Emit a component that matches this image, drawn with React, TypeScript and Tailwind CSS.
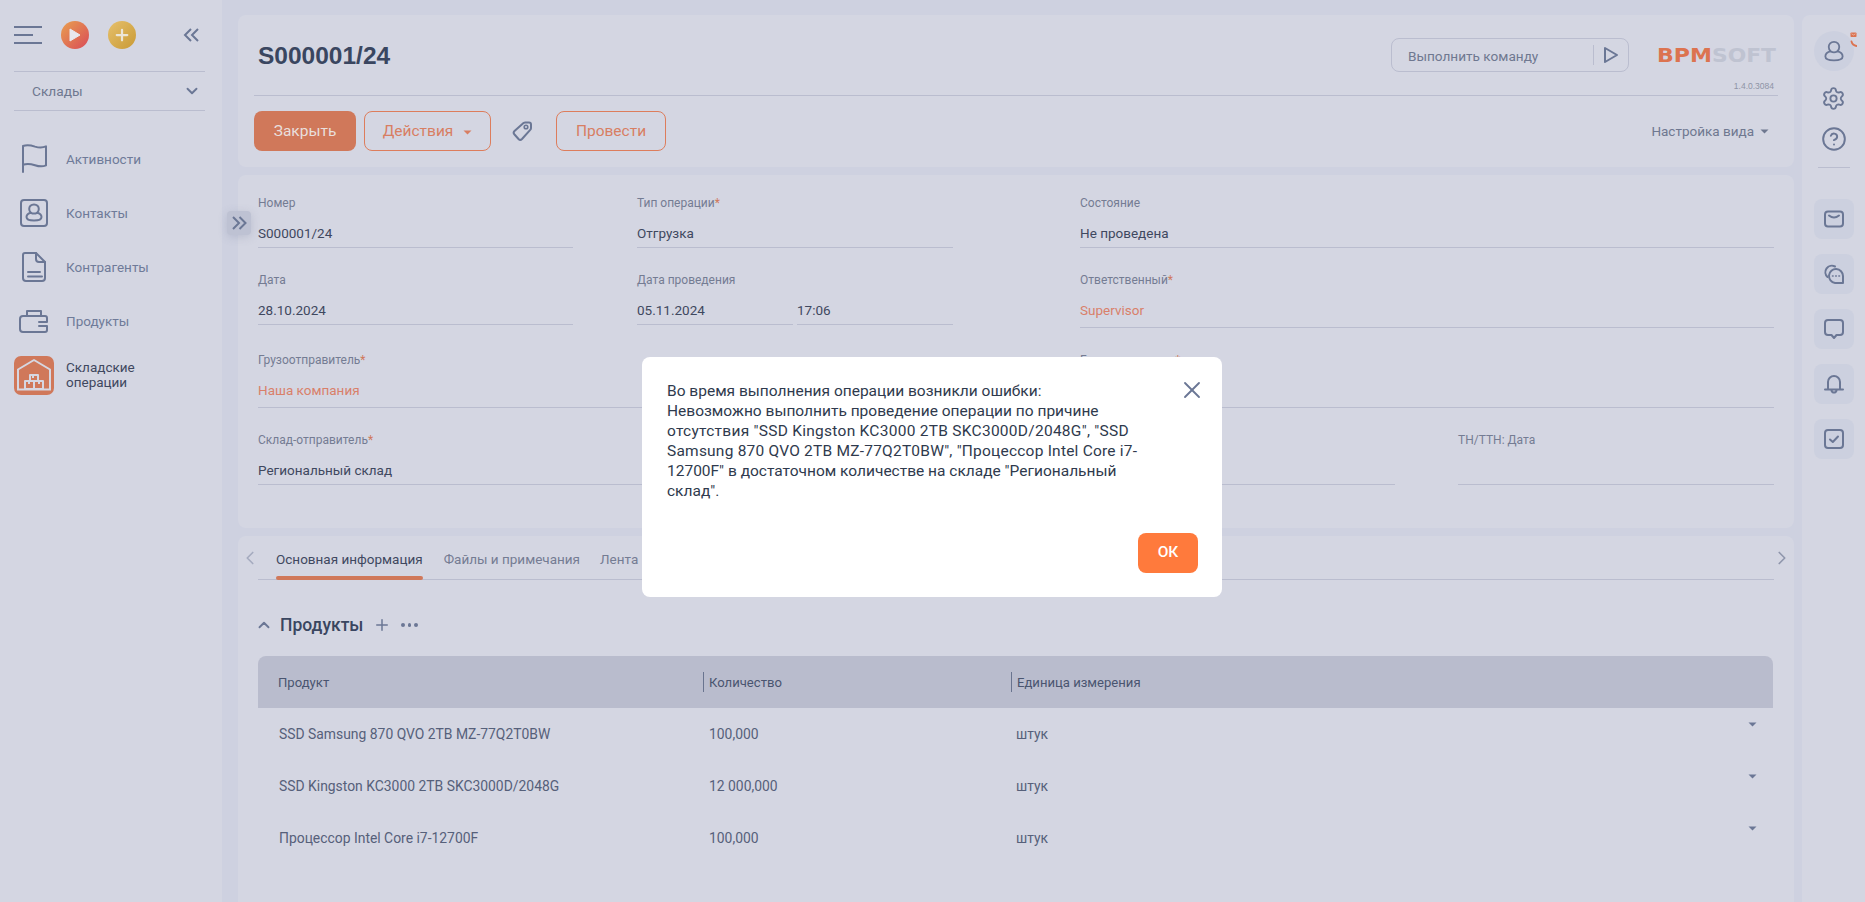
import React from "react";
import { Settings, CircleHelp, ChevronDown, ChevronUp, ChevronLeft, ChevronRight, X, Plus } from "lucide-react";

const ink = "#6b7795";

function Caret({ className }: { className: string }) {
  return (
    <svg width="9" height="5" viewBox="0 0 9 5" className={className}>
      <path d="M0.5 0.5h8L4.5 4.5z" fill="currentColor" />
    </svg>
  );
}

function NavIcon({ kind }: { kind: string }) {
  const p = { fill: "none", stroke: ink, strokeWidth: 2, strokeLinecap: "round" as const, strokeLinejoin: "round" as const };
  if (kind === "flag")
    return (
      <svg width="32" height="32" viewBox="0 0 32 32">
        <path {...p} d="M5 29V3c4-1.600 8-.8 12 .6 4 1.200 7.500 1.300 11-.2v19c-3.500 1.500-7 1.200-11-.2-4-1.300-8-2-12-.4" />
      </svg>
    );
  if (kind === "contact")
    return (
      <svg width="32" height="32" viewBox="0 0 32 32">
        <rect {...p} x="3" y="3" width="26" height="26" rx="3" />
        <path {...p} d="M16 7.500c-3 0-4.800 2-4.800 4.500 0 1.600.7 2.900 1.700 3.800-2.300.6-4.400 2-4.400 4.200 0 2.500 3 3.500 7.500 3.500s7.500-1 7.500-3.500c0-2.200-2.100-3.600-4.400-4.200 1-.9 1.700-2.200 1.700-3.800 0-2.500-1.800-4.500-4.800-4.500z" />
        <path {...p} d="M12.900 15.800c1.900 1 4.300 1 6.200 0" />
      </svg>
    );
  if (kind === "doc")
    return (
      <svg width="32" height="32" viewBox="0 0 32 32">
        <path {...p} d="M7 2h11l9 9v16a3 3 0 0 1-3 3H8a3 3 0 0 1-3-3V4a2 2 0 0 1 2-2z" />
        <path {...p} d="M18 2v6a3 3 0 0 0 3 3h6M10 21h12M10 25.500h14" />
      </svg>
    );
  return (
    <svg width="32" height="32" viewBox="0 0 32 32">
      <path {...p} d="M29 17v-4a2 2 0 0 0-2-2H5a3 3 0 0 0-3 3v10a3 3 0 0 0 3 3h22a2 2 0 0 0 2-2v-4M9 11V6h14v5M21 17h8M21 21h8" />
    </svg>
  );
}

function Warehouse() {
  return (
    <svg width="40" height="39" viewBox="0 0 40 39">
      <rect width="40" height="39" rx="7" fill="#d0785a" />
      <g fill="none" stroke="#d6d7e2" strokeWidth="2" strokeLinejoin="round">
        <path d="M4 33V13.500L20 4l16 9.500V33" />
        <path d="M3 33.500h34" />
        <path d="M16 19h8v6h-8zM11 25h9v8h-9zM20 25h9v8h-9zM19 19v3M15 25v3M25 25v3" />
      </g>
    </svg>
  );
}

function RailIcon({ kind }: { kind: string }) {
  const p = { fill: "none", stroke: ink, strokeWidth: 2, strokeLinecap: "round" as const, strokeLinejoin: "round" as const };
  if (kind === "mail")
    return (
      <svg width="20" height="20" viewBox="0 0 20 20">
        <rect {...p} x="1" y="2.500" width="18" height="15" rx="3" />
        <path {...p} d="M5 6.500c3 2.400 7 2.400 10 0" />
      </svg>
    );
  if (kind === "chats")
    return (
      <svg width="20" height="20" viewBox="0 0 20 20">
        <path {...p} d="M3.500 13A6.500 6.500 0 0 1 11 2.500" />
        <path {...p} d="M19 19h-8a7 7 0 1 1 8-7z" />
        <path d="M8.500 12h.6M11.700 12h.6M14.900 12h.6" stroke={ink} strokeWidth="1.600" strokeLinecap="round" />
      </svg>
    );
  if (kind === "chat")
    return (
      <svg width="20" height="22" viewBox="0 0 20 22">
        <path {...p} d="M4 2h12a3 3 0 0 1 3 3v9a3 3 0 0 1-3 3h-3.500L10 20l-2.500-3H4a3 3 0 0 1-3-3V5a3 3 0 0 1 3-3z" />
      </svg>
    );
  if (kind === "bell")
    return (
      <svg width="20" height="20" viewBox="0 0 20 20">
        <path {...p} d="M4 15.500V8a6 6 0 0 1 12 0v7.500M1 15.500h18M7.500 16.500c.6 2.700 4.400 2.700 5 0" />
      </svg>
    );
  return (
    <svg width="20" height="20" viewBox="0 0 20 20">
      <rect {...p} x="1" y="1" width="18" height="18" rx="3" />
      <path {...p} d="M6 10.500l2.800 2.500L14 7.500" />
    </svg>
  );
}

function Field({ label, star, value, tone, w, gap, pb }: { label?: string; star?: boolean; value?: string; tone?: string; w: string; gap: string; pb: string }) {
  return (
    <div className={`flex flex-col border-b border-[#babdcf] ${w} ${pb}`}>
      <div className="h-4 text-[12px] leading-4 text-[#747c93]">
        {label}
        {star && <span className="text-[#d0785a]">*</span>}
      </div>
      <div className={`h-5 text-[13.500px] leading-5 ${gap} ${tone === "o" ? "text-[#d9806a]" : "text-[#3f485f]"}`}>{value}</div>
    </div>
  );
}

const rows = [
  ["SSD Samsung 870 QVO 2TB MZ-77Q2T0BW", "100,000"],
  ["SSD Kingston KC3000 2TB SKC3000D/2048G", "12 000,000"],
  ["Процессор Intel Core i7-12700F", "100,000"],
];

export default function App() {
  return (
    <div className="relative flex h-[902px] w-[1865px] overflow-hidden bg-[#ced1e0] font-['Roboto',sans-serif]">
      {/* sidebar */}
      <aside className="flex w-[222px] shrink-0 flex-col bg-[#d4d6e2] px-[14px]">
        <div className="flex h-[71px] items-center pb-[1px]">
          <svg width="28" height="18" viewBox="0 0 28 18" className="shrink-0">
            <path d="M0 1h28M0 9h19M0 17h28" stroke={ink} strokeWidth="2" />
          </svg>
          <div className="ml-[19px] flex h-7 w-7 shrink-0 items-center justify-center rounded-full bg-[linear-gradient(135deg,#e9a04f,#d94b58)]">
            <svg width="12" height="14" viewBox="0 0 12 14"><path d="M1 1l10 6-10 6z" fill="#e8e8ee" stroke="#e8e8ee" strokeLinejoin="round" /></svg>
          </div>
          <div className="ml-[19px] flex h-7 w-7 shrink-0 items-center justify-center rounded-full bg-[linear-gradient(135deg,#e6c06c,#c99a35)]">
            <Plus size={18} strokeWidth={3} color="#ece6d8" />
          </div>
          <svg width="16" height="14" viewBox="0 0 16 14" className="ml-[47px] shrink-0">
            <path d="M8 1L2 7l6 6M15 1L9 7l6 6" fill="none" stroke={ink} strokeWidth="2" />
          </svg>
        </div>
        <div className="flex h-[40px] w-[191px] items-center border-y border-[#babdcf] pl-[18px] pr-[4px] text-[13.700px] text-[#6f7890]">
          <span className="flex-1">Склады</span>
          <ChevronDown size={18} strokeWidth={2.500} color={ink} />
        </div>
        <nav className="mt-[21px] flex flex-col text-[13.500px] text-[#6f7b99]">
          {[["flag", "Активности"], ["contact", "Контакты"], ["doc", "Контрагенты"], ["wallet", "Продукты"]].map(([k, t]) => (
            <div key={k} className="flex h-[54px] items-center">
              <div className="ml-[4px] w-[48px]"><NavIcon kind={k} /></div>
              <span className="pt-[1px]">{t}</span>
            </div>
          ))}
          <div className="flex h-[54px] items-center">
            <div className="w-[52px]"><Warehouse /></div>
            <span className="leading-[15px] text-[#3f485f]">Складские<br />операции</span>
          </div>
        </nav>
      </aside>

      {/* expander */}
      <div className="absolute left-[227px] top-[211px] flex h-6 w-6 items-center justify-center rounded-[4px] bg-[#bec2d3] shadow-[0_2px_8px_rgba(110,118,150,0.25)]">
        <svg width="15" height="14" viewBox="0 0 15 14">
          <path d="M1 1l6 6-6 6M7.500 1l6 6-6 6" fill="none" stroke={ink} strokeWidth="2" />
        </svg>
      </div>

      {/* main */}
      <main className="ml-4 flex w-[1556px] shrink-0 flex-col gap-2 pt-[15px]">
        <section className="h-[152px] rounded-lg bg-[#d4d6e2] px-4">
          <div className="flex h-[81px] items-center border-b border-[#babdcf] pb-[1px]">
            <h1 className="ml-1 flex-1 pt-[3px] font-['Liberation_Sans',sans-serif] text-[24.500px] font-bold text-[#3a4660]">S000001/24</h1>
            <div className="flex h-[34px] w-[238px] items-center rounded-lg border border-[#babdcf] pl-[16px] text-[13.600px] text-[#6f7890]">
              <span className="flex-1 pt-[3px]">Выполнить команду</span>
              <div className="h-5 w-px bg-[#babdcf]" />
              <svg width="16" height="18" viewBox="0 0 16 18" className="mx-[9px]"><path d="M2 2l12 7-12 7z" fill="none" stroke={ink} strokeWidth="2" strokeLinejoin="round" /></svg>
            </div>
            <div className="ml-[28px] mr-[2px] flex h-[80px] w-[119px] flex-col items-end pt-[29px]">
              <svg width="119" height="21" viewBox="0 0 119 21" className="overflow-visible">
                <text x="0" y="18" fontFamily="DejaVu Sans" fontWeight="700" fontSize="20" fill="#dc7350" textLength="55" lengthAdjust="spacingAndGlyphs">BPM</text>
                <text x="55" y="18" fontFamily="DejaVu Sans" fontWeight="700" fontSize="20" fill="#bfc3d1" textLength="64" lengthAdjust="spacingAndGlyphs">SOFT</text>
              </svg>
              <span className="mr-[2px] mt-[16px] font-['Liberation_Sans',sans-serif] text-[8.500px] leading-[10px] text-[#8e94a6]">1.4.0.3084</span>
            </div>
          </div>
          <div className="mt-[15px] flex items-center text-[15.500px]">
            <button className="flex h-10 w-[102px] items-center justify-center rounded-lg bg-[#d0785a] pt-[2px] text-[#e9dfdc]">Закрыть</button>
            <button className="ml-2 flex h-10 w-[127px] items-center justify-center gap-[10px] rounded-lg border border-[#dd7d5c] pt-[2px] text-[#d87e62]">
              Действия
              <Caret className="text-[#d87e62]" />
            </button>
            <svg width="22" height="22" viewBox="0 0 22 22" className="ml-[20px]">
              <path d="M3.500 11L12.500 3a3 3 0 0 1 2-.6h3.500a2 2 0 0 1 2 2v3.500a3 3 0 0 1-.8 2L11 19a2.500 2.500 0 0 1-3.500 0L3.500 14.500a2.500 2.500 0 0 1 0-3.500z" fill="none" stroke={ink} strokeWidth="2" strokeLinejoin="round" />
              <circle cx="15" cy="7" r="1.800" fill="none" stroke={ink} strokeWidth="1.600" />
            </svg>
            <button className="ml-[23px] flex h-10 w-[110px] items-center justify-center rounded-lg border border-[#dd7d5c] pt-[2px] text-[#d87e62]">Провести</button>
            <div className="ml-auto mr-[9px] flex items-center gap-[6px] text-[13.500px] text-[#6f7890]">
              Настройка вида
              <Caret className="text-[#6f7890]" />
            </div>
          </div>
        </section>

        <section className="h-[353px] rounded-lg bg-[#d4d6e2] pl-5 pr-5 pt-5">
          <div className="flex h-[77px] items-start">
            <Field label="Номер" value="S000001/24" w="w-[315px]" gap="mt-3" pb="pb-1" />
            <Field label="Тип операции" star value="Отгрузка" w="w-[316px] ml-[64px]" gap="mt-3" pb="pb-1" />
            <Field label="Состояние" value="Не проведена" w="w-[694px] ml-[127px]" gap="mt-3" pb="pb-1" />
          </div>
          <div className="flex h-[80px] items-start">
            <Field label="Дата" value="28.10.2024" w="w-[315px]" gap="mt-3" pb="pb-1" />
            <Field label="Дата проведения" value="05.11.2024" w="w-[156px] ml-[64px]" gap="mt-3" pb="pb-1" />
            <Field label=" " value="17:06" w="w-[156px] ml-[4px]" gap="mt-3" pb="pb-1" />
            <Field label="Ответственный" star value="Supervisor" tone="o" w="w-[694px] ml-[127px]" gap="mt-3" pb="pb-[7px]" />
          </div>
          <div className="flex h-[80px] items-start">
            <Field label="Грузоотправитель" star value="Наша компания" tone="o" w="w-[695px]" gap="mt-3" pb="pb-[7px]" />
            <Field label="Грузополучатель" star w="w-[694px] ml-[127px]" gap="mt-3" pb="pb-[7px]" />
          </div>
          <div className="flex items-start">
            <Field label="Склад-отправитель" star value="Региональный склад" w="w-[500px]" gap="mt-3" pb="pb-1" />
            <Field w="w-[617px] ml-[20px]" gap="mt-3" pb="pb-1" />
            <Field label="ТН/ТТН: Дата" w="w-[316px] ml-[63px]" gap="mt-3" pb="pb-1" />
          </div>
        </section>

        <section className="flex-1 rounded-t-lg bg-[#d4d6e2] px-5">
          <div className="-mx-[9px] flex h-[43px] items-center justify-between">
            <ChevronLeft size={22} strokeWidth={1.800} color="#a5abbf" className="-ml-[10px] mt-[1px]" />
            <ChevronRight size={22} strokeWidth={1.800} color="#8f96ac" className="-mr-[10px] mt-[1px]" />
          </div>
          <div className="-mt-[43px] flex h-[44px] border-b border-[#babdcf] pl-[18px] text-[13.500px]">
            <div className="relative flex h-[43px] items-center pt-[3px] text-[#3f485f]">
              Основная информация
              <div className="absolute bottom-[-1px] left-0 right-0 h-1 rounded-full bg-[#d0785a]" />
            </div>
            <div className="ml-[21px] flex h-[43px] items-center pt-[3px] text-[#747c93]">Файлы и примечания</div>
            <div className="ml-5 flex h-[43px] items-center pt-[3px] text-[#747c93]">Лента</div>
          </div>
          <div className="mt-[31px] flex h-7 items-center">
            <ChevronUp size={18} strokeWidth={2.500} color={ink} className="-ml-[3px]" />
            <span className="ml-[7px] text-[17.500px] font-medium text-[#3a4660]">Продукты</span>
            <Plus size={18} strokeWidth={2} color={ink} className="ml-[10px]" />
            <span className="ml-[10px] flex gap-[3px]">
              <i className="h-[3.500px] w-[3.500px] rounded-full bg-[#6b7795]" />
              <i className="h-[3.500px] w-[3.500px] rounded-full bg-[#6b7795]" />
              <i className="h-[3.500px] w-[3.500px] rounded-full bg-[#6b7795]" />
            </span>
          </div>
          <div className="mt-[17px] grid h-[52px] w-[1515px] grid-cols-[445px_308px_1fr] items-center rounded-t-lg bg-[#b9bccd] text-[13.100px] text-[#4a5570]">
            <div className="pl-5 pt-[1px]">Продукт</div>
            <div className="flex items-center"><i className="h-5 w-px bg-[#69748f]" /><span className="pl-[5px] pt-[1px]">Количество</span></div>
            <div className="flex items-center"><i className="h-5 w-px bg-[#69748f]" /><span className="pl-[5px] pt-[1px]">Единица измерения</span></div>
          </div>
          {rows.map(([a, b]) => (
            <div key={a} className="grid h-[52px] w-[1515px] grid-cols-[445px_308px_1fr_30px] items-center text-[13.900px] text-[#56607a]">
              <div className="pl-[21px]">{a}</div>
              <div className="pl-[6px]">{b}</div>
              <div className="pl-[5px]">штук</div>
              <Caret className="ml-[5px] mt-[14px] self-start text-[#6b7795]" />
            </div>
          ))}
        </section>
      </main>

      {/* right rail */}
      <aside className="ml-2 mt-[15px] flex flex-1 flex-col items-center rounded-tl-lg bg-[#d4d6e2]">
        <div className="relative mt-4 flex h-10 w-10 items-center justify-center rounded-full bg-[#ccd0df]">
          <svg width="20" height="22" viewBox="0 0 22 24">
            <path d="M11 2c-3.600 0-5.800 2.400-5.800 5.600 0 2.100 1 3.800 2.300 4.900C4 13.200 1.500 15 1.500 18.100c0 3 3.600 4.200 9.500 4.200s9.500-1.200 9.500-4.200c0-3.100-2.500-4.900-6-5.600 1.300-1.100 2.300-2.800 2.300-4.900C16.800 4.400 14.600 2 11 2z" fill="none" stroke={ink} strokeWidth="2" strokeLinejoin="round" />
            <path d="M7.500 12.500c2.200 1.200 4.800 1.200 7 0" fill="none" stroke={ink} strokeWidth="2" />
          </svg>
          <svg width="7" height="16" viewBox="0 0 7 16" className="absolute right-[-3px] top-[1px]">
            <rect x="0.500" y="0.500" width="6" height="4.500" rx="0.800" fill="#dc7350" />
            <path d="M1.500 1.800l2 1.200 2-1.200" stroke="#e9d9d4" strokeWidth="0.600" fill="none" />
            <path d="M1.500 9.500c.6 2.500 2.400 4 5 4.500" stroke="#dc7350" strokeWidth="1.800" fill="none" strokeLinecap="round" />
          </svg>
        </div>
        <Settings size={25} strokeWidth={1.800} color={ink} className="mt-[15px]" />
        <CircleHelp size={26} strokeWidth={1.800} color={ink} className="mt-[15px]" />
        <div className="mt-[15px] h-px w-[32px] bg-[#babdcf]" />
        <div className="mt-[31px] flex flex-col gap-[15px]">
          {["mail", "chats", "chat", "bell", "check"].map((k) => (
            <div key={k} className="flex h-10 w-10 items-center justify-center rounded-lg bg-[#ccd0df]"><RailIcon kind={k} /></div>
          ))}
        </div>
      </aside>

      {/* dialog */}
      <div className="fixed inset-0 flex items-start justify-center pr-[1px] pt-[357px]">
        <div className="flex h-[240px] w-[580px] flex-col rounded-lg bg-white pb-[24px] pl-[25px] pr-[24px] pt-[24px]">
          <div className="flex flex-1 items-start justify-between">
            <p className="text-[15.500px] leading-5 text-[#2f3a4d]">
              Во время выполнения операции возникли ошибки:<br />
              Невозможно выполнить проведение операции по причине<br />
              <span className="tracking-[0.27px]">отсутствия "SSD Kingston KC3000 2TB SKC3000D/2048G", "SSD</span><br />
              <span className="tracking-[0.22px]">Samsung 870 QVO 2TB MZ-77Q2T0BW", "Процессор Intel Core i7-</span><br />
              12700F" в достаточном количестве на складе "Региональный<br />
              склад".
            </p>
            <X size={28} strokeWidth={1.600} color="#6b7795" className="mr-[-8px] mt-[-5px]" />
          </div>
          <div className="flex justify-end">
            <button className="h-10 w-[60px] rounded-lg bg-[#ff7a3c] text-[15.500px] font-medium text-white">ОК</button>
          </div>
        </div>
      </div>
    </div>
  );
}
